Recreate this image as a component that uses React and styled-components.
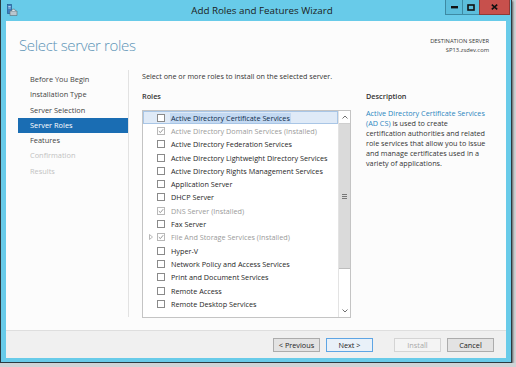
import React from "react";
import styled, { createGlobalStyle } from "styled-components";

const GlobalStyle = createGlobalStyle`
  html, body {
    margin: 0;
    padding: 0;
    background: #cfd3d6;
  }
  body {
    font-family: "Open Sans", "Liberation Sans", sans-serif;
    -webkit-font-smoothing: antialiased;
  }
`;

const Window = styled.div`
  box-sizing: border-box;
  width: 512px;
  height: 363px;
  background: #68cbe9;
  border: 1px solid #2c3a40;
  border-top: none;
  box-shadow: 1px 1px 2px rgba(0, 0, 0, 0.6);
  display: flex;
  flex-direction: column;
`;

const TitleBar = styled.div`
  height: 21px;
  flex: none;
  display: grid;
  grid-template-columns: 1fr auto 1fr;
  align-items: start;
`;

const AppIcon = styled.svg`
  margin: 4px 0 0 6px;
`;

const Title = styled.div`
  font-size: 9.8px;
  line-height: 21px;
  color: #1b1b1b;
  padding-left: 12px;
`;

const Controls = styled.div`
  display: flex;
  justify-content: flex-end;
  padding-right: 1px;
`;

const CtrlButton = styled.div`
  box-sizing: border-box;
  width: ${(p) => (p.$close ? 31 : 18)}px;
  height: 15px;
  background: ${(p) => (p.$close ? "#c7504c" : "#5cbedc")};
  border: 1px solid ${(p) => (p.$close ? "#8f3a36" : "#3d8aa3")};
  border-top: none;
  margin-left: -1px;
  display: flex;
  align-items: center;
  justify-content: center;
`;

const Client = styled.div`
  flex: 1;
  margin: 0 5px 4px 5px;
  background: #fcfcfc;
  display: flex;
  flex-direction: column;
`;

const Header = styled.div`
  height: 47px;
  flex: none;
  display: flex;
  justify-content: space-between;
  align-items: flex-start;
  padding: 0 17px 0 13px;
`;

const Heading = styled.h1`
  margin: 14px 0 0;
  font-size: 15px;
  font-weight: 300;
  color: #5b93b6;
  letter-spacing: -0.35px;
`;

const Destination = styled.div`
  margin-top: 16px;
  text-align: right;
  font-size: 5.8px;
  line-height: 9px;
  color: #3a3a3a;
`;

const Main = styled.div`
  flex: 1;
  display: flex;
`;

const Nav = styled.div`
  width: 110px;
  margin-left: 12px;
  padding-top: 4px;
  display: flex;
  flex-direction: column;
`;

const NavItem = styled.div`
  height: 15.3px;
  line-height: 15.3px;
  padding-left: 12px;
  font-size: 7.4px;
  color: ${(p) => (p.$active ? "#ffffff" : p.$disabled ? "#c2c2c2" : "#444444")};
  background: ${(p) => (p.$active ? "#1a6db3" : "transparent")};
`;

const Separator = styled.div`
  width: 1px;
  background: #e2e2e2;
  margin: 2px 0 13px;
`;

const Content = styled.div`
  flex: 1;
  padding: 3px 0 0 13px;
  display: flex;
  flex-direction: column;
`;

const Intro = styled.div`
  font-size: 7.2px;
  line-height: 10px;
  color: #333333;
`;

const Columns = styled.div`
  display: flex;
  gap: 15px;
  margin-top: 10px;
`;

const RolesCol = styled.div`
  width: 209px;
  display: flex;
  flex-direction: column;
`;

const DescCol = styled.div`
  width: 132px;
`;

const Label = styled.div`
  font-size: 7.3px;
  font-weight: 600;
  line-height: 10px;
  color: #333333;
  margin-bottom: ${(p) => p.$gap}px;
`;

const ListBox = styled.div`
  box-sizing: border-box;
  height: 208px;
  border: 1px solid #c4c4c4;
  background: #ffffff;
  display: flex;
`;

const Rows = styled.div`
  flex: 1;
`;

const Row = styled.div`
  box-sizing: border-box;
  height: 13.3px;
  display: flex;
  align-items: center;
  font-size: 7.25px;
  color: ${(p) => (p.$installed ? "#9a9a9a" : "#262626")};
  background: ${(p) => (p.$selected ? "#dfeaf7" : "transparent")};
  border: 1px solid ${(p) => (p.$selected ? "#a9c6e6" : "transparent")};
`;

const Expander = styled.span`
  width: 13px;
  flex: none;
  display: flex;
  justify-content: center;
`;

const Box = styled.span`
  box-sizing: border-box;
  width: 8px;
  height: 8px;
  flex: none;
  margin: 0 5px 0 0;
  border: 1px solid ${(p) => (p.$checked ? "#b8b8b8" : "#8a8a8a")};
  background: #ffffff;
  display: flex;
  align-items: center;
  justify-content: center;
`;

const RowText = styled.span`
  white-space: nowrap;
  padding: 0 1px;
  background: ${(p) => (p.$focus ? "#c3d9f2" : "transparent")};
  color: ${(p) => (p.$focus ? "#0d2a4a" : "inherit")};
`;

const Scrollbar = styled.div`
  width: 11px;
  flex: none;
  border-left: 1px solid #e3e3e3;
  background: #ffffff;
  display: flex;
  flex-direction: column;
`;

const Arrow = styled.div`
  height: 12px;
  flex: none;
  display: flex;
  align-items: center;
  justify-content: center;
`;

const Thumb = styled.div`
  height: 144px;
  flex: none;
  background: #dadada;
  border-top: 1px solid #cfcfcf;
  border-bottom: 1px solid #bdbdbd;
  display: flex;
  align-items: center;
  justify-content: center;
`;

const Track = styled.div`
  flex: 1;
`;

const Grip = styled.div`
  width: 5px;
  height: 5px;
  box-sizing: border-box;
  border-top: 1px solid #777;
  border-bottom: 1px solid #777;
  background: linear-gradient(#777, #777) center / 100% 1px no-repeat;
`;

const DescText = styled.div`
  font-size: 7.25px;
  line-height: 10px;
  color: #333333;
  white-space: nowrap;
`;

const Link = styled.span`
  color: #2b86c0;
`;

const Footer = styled.div`
  height: 28px;
  flex: none;
  box-sizing: border-box;
  background: #f0f0f0;
  border-top: 1px solid #dedede;
  display: flex;
  justify-content: flex-end;
  align-items: flex-start;
  padding: 7px 12px 0 0;
`;

const Button = styled.div`
  box-sizing: border-box;
  width: 47px;
  height: 14px;
  margin-left: ${(p) => p.$gap || 6}px;
  display: flex;
  align-items: center;
  justify-content: center;
  font-size: 7.3px;
  color: ${(p) => (p.$disabled ? "#a8a8a8" : "#222222")};
  background: ${(p) => (p.$disabled ? "#f4f4f4" : p.$default ? "#e9f1f9" : "#e3e3e3")};
  border: 1px solid
    ${(p) => (p.$disabled ? "#d4d4d4" : p.$default ? "#5ea5e4" : "#acacac")};
`;

const roles = [
  { name: "Active Directory Certificate Services", selected: true },
  { name: "Active Directory Domain Services (Installed)", installed: true },
  { name: "Active Directory Federation Services" },
  { name: "Active Directory Lightweight Directory Services" },
  { name: "Active Directory Rights Management Services" },
  { name: "Application Server" },
  { name: "DHCP Server" },
  { name: "DNS Server (Installed)", installed: true },
  { name: "Fax Server" },
  { name: "File And Storage Services (Installed)", installed: true, expand: true },
  { name: "Hyper-V" },
  { name: "Network Policy and Access Services" },
  { name: "Print and Document Services" },
  { name: "Remote Access" },
  { name: "Remote Desktop Services" },
];

const steps = [
  { label: "Before You Begin" },
  { label: "Installation Type" },
  { label: "Server Selection" },
  { label: "Server Roles", active: true },
  { label: "Features" },
  { label: "Confirmation", disabled: true },
  { label: "Results", disabled: true },
];

function Check() {
  return (
    <svg width="6" height="6" viewBox="0 0 6 6">
      <path d="M0.8 3.1 L2.4 4.6 L5.2 1.2" fill="none" stroke="#8c8c8c" strokeWidth="0.9" />
    </svg>
  );
}

function ExpandArrow() {
  return (
    <svg width="4" height="6" viewBox="0 0 4 6">
      <path d="M0.5 0.5 L3.5 3 L0.5 5.5 Z" fill="none" stroke="#a6a6a6" strokeWidth="0.8" />
    </svg>
  );
}

export default function App() {
  return (
    <>
      <GlobalStyle />
      <Window>
        <TitleBar>
          <AppIcon width="11" height="12" viewBox="0 0 11 12">
            <rect x="0.5" y="0.5" width="4" height="9" fill="#3d7fc1" stroke="#1f4f86" strokeWidth="0.6" />
            <rect x="1.3" y="2" width="2.4" height="0.8" fill="#cfe6f7" />
            <rect x="1.3" y="3.6" width="2.4" height="0.8" fill="#cfe6f7" />
            <path d="M3 7 H10 V11.5 H3 Z" fill="#b9c6cf" stroke="#5c6b75" strokeWidth="0.6" />
            <path d="M4.5 7 L5.5 5.2 H7.5 L8.5 7" fill="#dfe6ea" stroke="#5c6b75" strokeWidth="0.6" />
          </AppIcon>
          <Title>Add Roles and Features Wizard</Title>
          <Controls>
            <CtrlButton>
              <svg width="7" height="3" viewBox="0 0 7 3">
                <rect x="0" y="0" width="7" height="2.4" fill="#111" />
              </svg>
            </CtrlButton>
            <CtrlButton>
              <svg width="8" height="7" viewBox="0 0 8 7">
                <rect x="1" y="1" width="6" height="5" fill="none" stroke="#111" strokeWidth="1.6" />
              </svg>
            </CtrlButton>
            <CtrlButton $close>
              <svg width="7" height="6" viewBox="0 0 7 6">
                <path d="M0.8 0.6 L6.2 5.4 M6.2 0.6 L0.8 5.4" stroke="#111" strokeWidth="1.6" />
              </svg>
            </CtrlButton>
          </Controls>
        </TitleBar>
        <Client>
          <Header>
            <Heading>Select server roles</Heading>
            <Destination>
              DESTINATION SERVER
              <br />
              SP13.zsdev.com
            </Destination>
          </Header>
          <Main>
            <Nav>
              {steps.map((s) => (
                <NavItem key={s.label} $active={s.active} $disabled={s.disabled}>
                  {s.label}
                </NavItem>
              ))}
            </Nav>
            <Separator />
            <Content>
              <Intro>Select one or more roles to install on the selected server.</Intro>
              <Columns>
                <RolesCol>
                  <Label $gap={9}>Roles</Label>
                  <ListBox>
                    <Rows>
                      {roles.map((r) => (
                        <Row key={r.name} $selected={r.selected} $installed={r.installed}>
                          <Expander>{r.expand && <ExpandArrow />}</Expander>
                          <Box $checked={r.installed}>{r.installed && <Check />}</Box>
                          <RowText $focus={r.selected}>{r.name}</RowText>
                        </Row>
                      ))}
                    </Rows>
                    <Scrollbar>
                      <Arrow>
                        <svg width="6" height="4" viewBox="0 0 6 4">
                          <path d="M0.5 3.5 L3 1 L5.5 3.5" fill="none" stroke="#606060" strokeWidth="0.9" />
                        </svg>
                      </Arrow>
                      <Thumb>
                        <Grip />
                      </Thumb>
                      <Track />
                      <Arrow>
                        <svg width="6" height="4" viewBox="0 0 6 4">
                          <path d="M0.5 0.5 L3 3 L5.5 0.5" fill="none" stroke="#606060" strokeWidth="0.9" />
                        </svg>
                      </Arrow>
                    </Scrollbar>
                  </ListBox>
                </RolesCol>
                <DescCol>
                  <Label $gap={7}>Description</Label>
                  <DescText>
                    <Link>
                      Active Directory Certificate Services
                      <br />
                      (AD CS)
                    </Link>{" "}
                    is used to create
                    <br />
                    certification authorities and related
                    <br />
                    role services that allow you to issue
                    <br />
                    and manage certificates used in a
                    <br />
                    variety of applications.
                  </DescText>
                </DescCol>
              </Columns>
            </Content>
          </Main>
          <Footer>
            <Button>&lt; Previous</Button>
            <Button $default>Next &gt;</Button>
            <Button $disabled $gap={21}>
              Install
            </Button>
            <Button>Cancel</Button>
          </Footer>
        </Client>
      </Window>
    </>
  );
}
